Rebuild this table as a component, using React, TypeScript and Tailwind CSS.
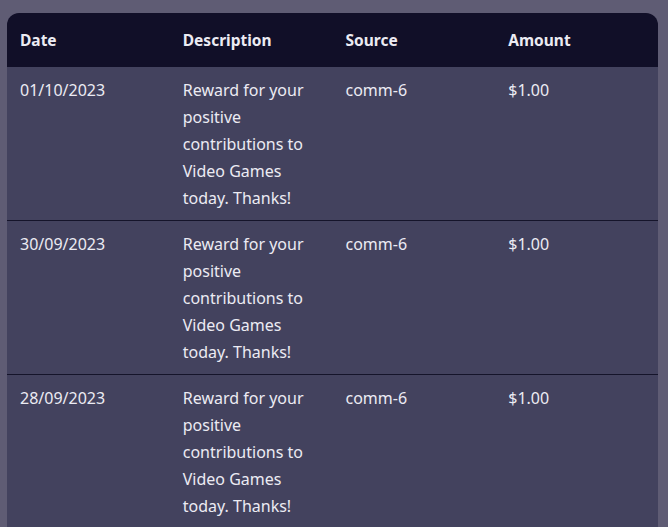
import React from "react";

const rows = [
  { date: "01/10/2023" },
  { date: "30/09/2023" },
  { date: "28/09/2023" },
];

export default function App() {
  return (
    <div
      className="min-h-screen bg-[#5f5c74] pt-[13px] pl-[7px] pr-[10px] overflow-hidden"
      style={{ height: 527 }}
    >
      <div
        className="rounded-t-[12px] overflow-hidden text-[#ecebf3] text-[16px]"
        style={{ fontFamily: '"Noto Sans", sans-serif' }}
      >
        <div className="grid grid-cols-4 bg-[#110f28] h-[54px] items-center font-bold text-[15.5px] pt-[2px]">
          <div className="px-[13px]">Date</div>
          <div className="px-[13px]">Description</div>
          <div className="px-[13px]">Source</div>
          <div className="px-[13px]">Amount</div>
        </div>
        {rows.map((r, i) => (
          <div
            key={i}
            className="grid grid-cols-4 bg-[#43425e] border-b border-[#15142a] pt-[10px] pb-[8px] leading-[27px]"
          >
            <div className="px-[13px]">{r.date}</div>
            <div className="px-[13px]">
              Reward for your positive contributions to Video Games today. Thanks!
            </div>
            <div className="px-[13px]">comm-6</div>
            <div className="px-[13px]">$1.00</div>
          </div>
        ))}
      </div>
    </div>
  );
}
